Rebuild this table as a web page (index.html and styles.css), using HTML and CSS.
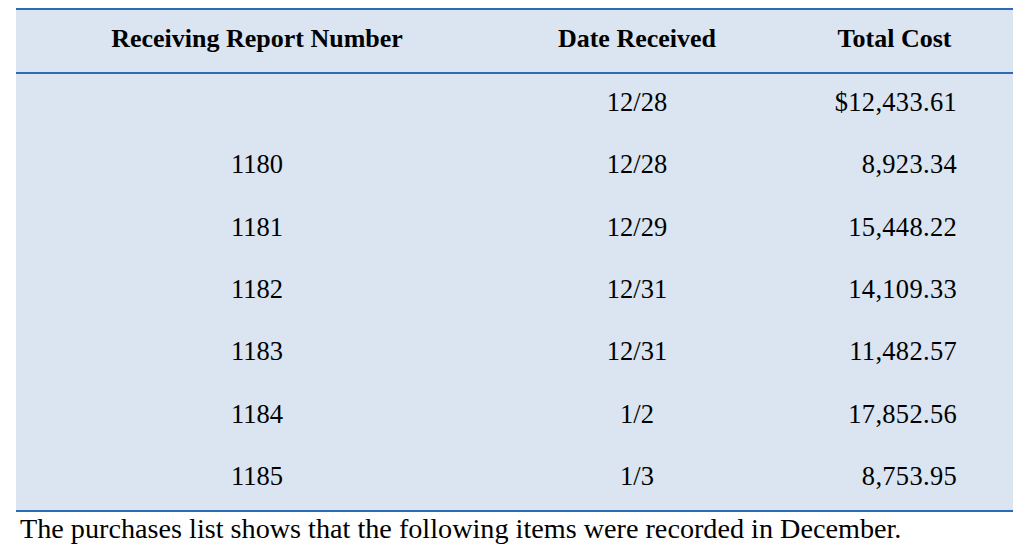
FILE: index.html
```html
<!DOCTYPE html>
<html>
<head>
<meta charset="utf-8">
<link rel="stylesheet" href="styles.css">
</head>
<body>
<table class="report">
  <colgroup>
    <col class="c1"><col class="c2"><col class="c3">
  </colgroup>
  <thead>
    <tr><th>Receiving Report Number</th><th>Date Received</th><th>Total Cost</th></tr>
  </thead>
  <tbody>
    <tr><td></td><td>12/28</td><td class="num">$12,433.61</td></tr>
    <tr><td>1180</td><td>12/28</td><td class="num">8,923.34</td></tr>
    <tr><td>1181</td><td>12/29</td><td class="num">15,448.22</td></tr>
    <tr><td>1182</td><td>12/31</td><td class="num">14,109.33</td></tr>
    <tr><td>1183</td><td>12/31</td><td class="num">11,482.57</td></tr>
    <tr><td>1184</td><td>1/2</td><td class="num">17,852.56</td></tr>
    <tr><td>1185</td><td>1/3</td><td class="num">8,753.95</td></tr>
  </tbody>
</table>
<p class="note">The purchases list shows that the following items were recorded in December.</p>
</body>
</html>
```
FILE: styles.css
```css
html, body {
  margin: 0;
  padding: 0;
  background: #ffffff;
}
body {
  padding: 8px 0 0 16px;
  font-family: "Liberation Serif", "Times New Roman", serif;
  color: #000;
}
.report {
  width: 997px;
  table-layout: fixed;
  border-collapse: separate;
  border-spacing: 0;
  background: #dae5f1;
  border-top: 2px solid #2b6cb5;
  border-bottom: 2px solid #2b6cb5;
}
.c1 { width: 482px; }
.c2 { width: 278px; }
.c3 { width: 237px; }
.report th {
  box-sizing: border-box;
  height: 64px;
  padding: 0 0 5px 0;
  font-size: 26px;
  font-weight: bold;
  text-align: center;
  vertical-align: middle;
  border-bottom: 2px solid #2b6cb5;
}
.report td {
  box-sizing: border-box;
  height: 62.3px;
  padding: 0 0 5px 0;
  font-size: 26.5px;
  text-align: center;
  vertical-align: middle;
}
.report td.num {
  text-align: right;
  padding-right: 56px;
  letter-spacing: 0.3px;
}
.note {
  margin: 1px 0 0 4px;
  font-size: 28.2px;
}
```
